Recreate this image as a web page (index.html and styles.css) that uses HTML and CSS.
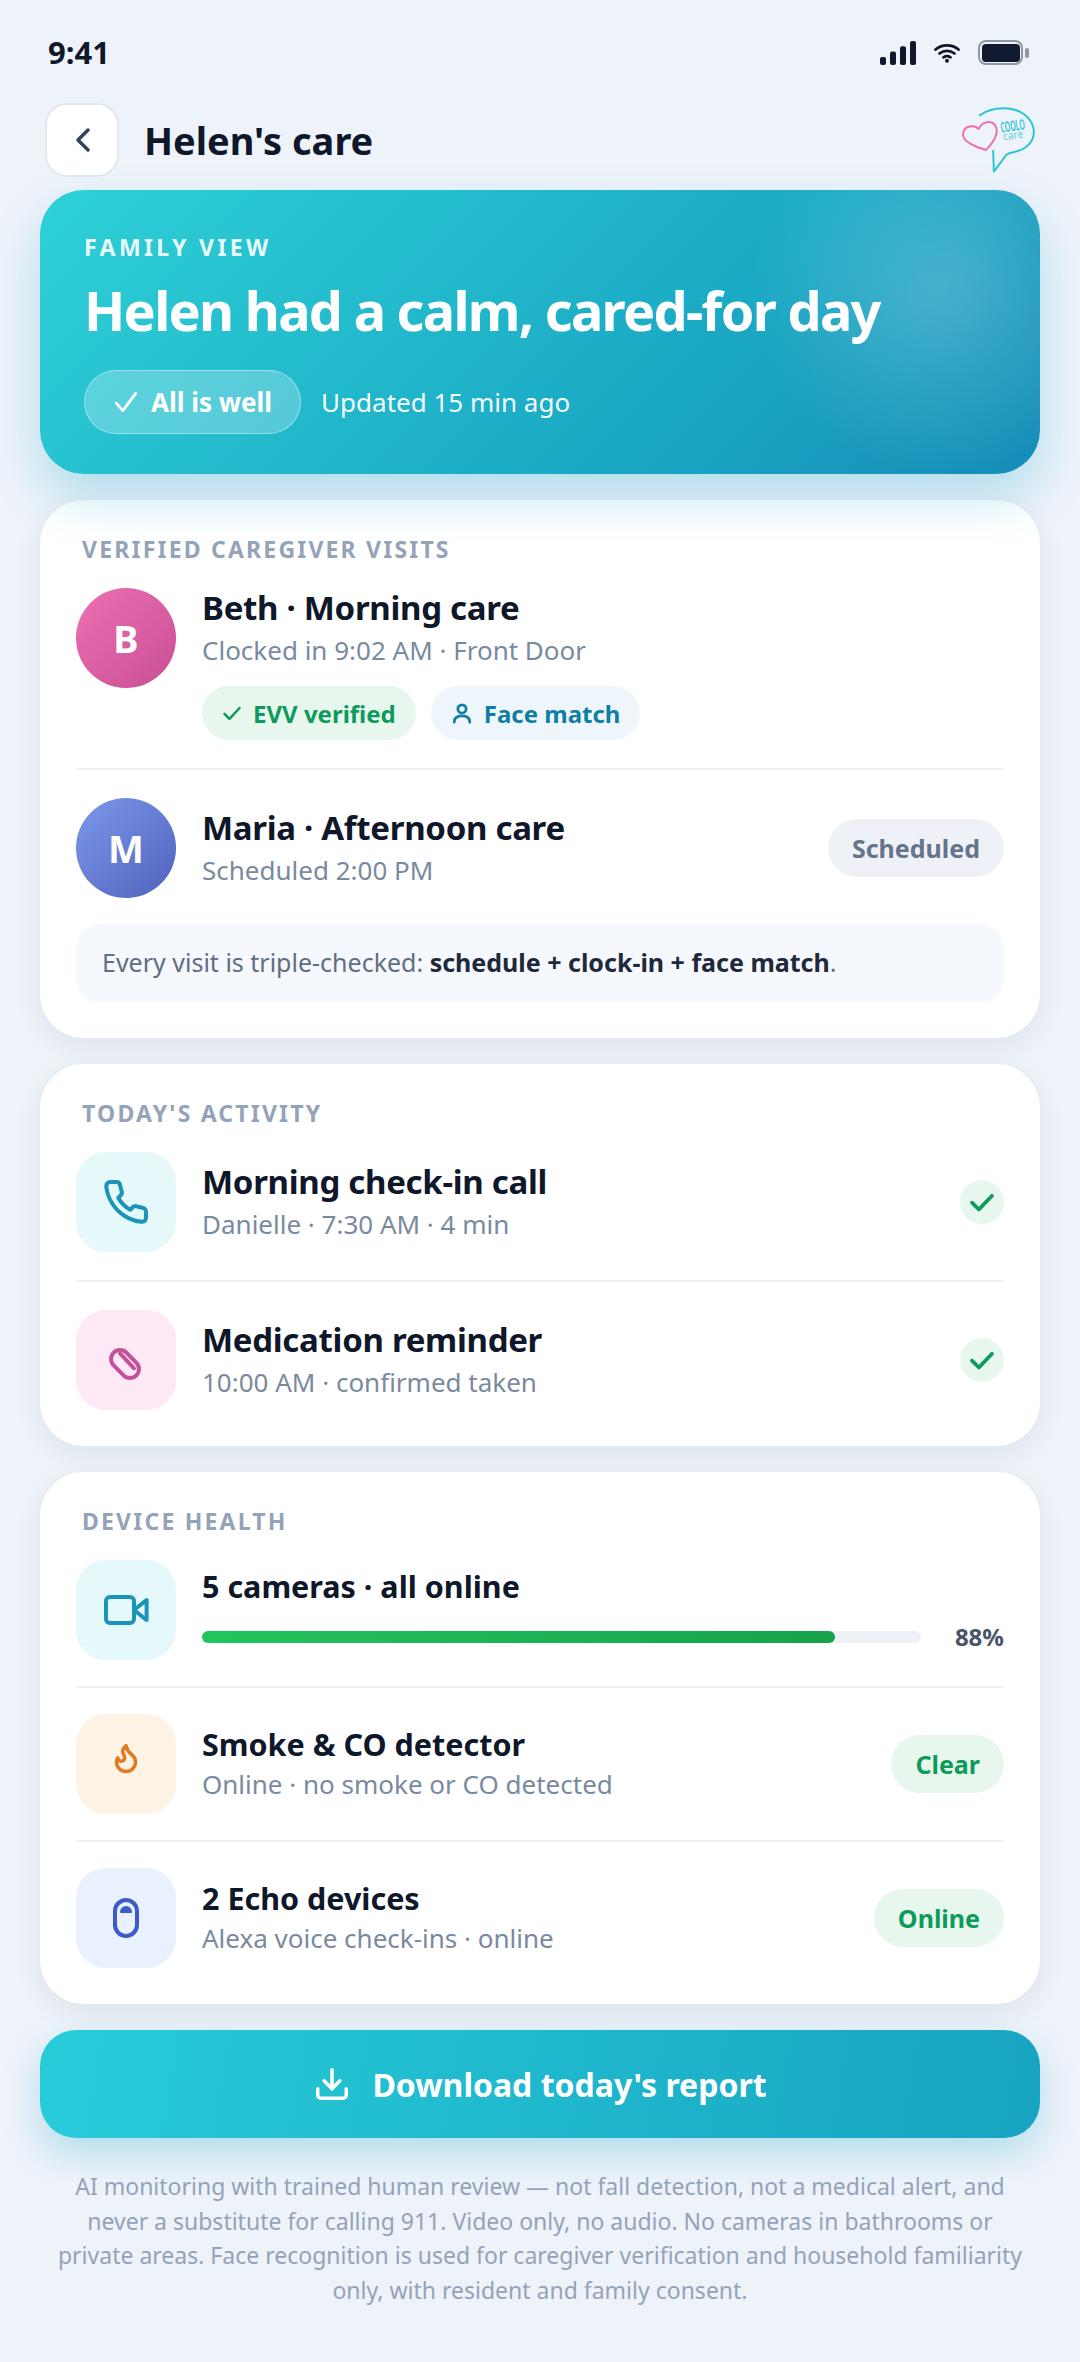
FILE: index.html
```html
<!DOCTYPE html>
<html>

<head>
	<meta charset="utf-8">
	<title>Helen's care</title>
	<link rel="stylesheet" href="styles.css">
</head>

<body>
	<div class="page">
		<!-- status bar -->
		<div class="status">
			<span class="time">9:41</span>
			<div class="status-icons">
				<svg class="signal" width="36" height="24" viewBox="0 0 36 24">
					<rect x="0" y="16" width="6" height="8" rx="2"></rect>
					<rect x="10" y="10.6" width="6" height="13.4" rx="2"></rect>
					<rect x="20" y="5.3" width="6" height="18.7" rx="2"></rect>
					<rect x="30" y="0" width="6" height="24" rx="2"></rect>
				</svg>
				<svg class="wifi" width="26" height="20" viewBox="0 0 26 20">
					<path d="M1.5 6.5C8 1 18 1 24.5 6.5"></path>
					<path d="M5.5 10.5C10 7 16 7 20.5 10.5"></path>
					<path d="M9.5 14.3C11.5 13 14.5 13 16.5 14.3"></path>
					<circle cx="13" cy="17.8" r="2"></circle>
				</svg>
				<div class="battery">
					<div class="battery-body"><div class="battery-fill"></div></div>
					<div class="battery-nub"></div>
				</div>
			</div>
		</div>

		<!-- header -->
		<div class="header">
			<button class="back">
				<svg width="24" height="30" viewBox="0 0 24 30"><path d="M18 5L8 15l10 10"></path></svg>
			</button>
			<h1 class="page-title">Helen's care</h1>
			<svg class="logo" width="78" height="74" viewBox="90 40 235 222">
				<path class="logo-bubble" d="M150 76C190 50 250 48 285 75C322 105 322 150 285 175C265 188 245 186 230 195L192 246L190 183"></path>
				<path class="logo-heart" d="M146 118C135 105 100 105 99 135C99 155 135 172 168 181C190 160 204 135 200 118C195 90 160 90 146 118Z"></path>
				<text class="logo-coolo" x="214" y="129" textLength="74" lengthAdjust="spacingAndGlyphs" transform="rotate(-8 214 129)">COOLO</text>
				<text class="logo-care" x="222" y="152" textLength="60" lengthAdjust="spacingAndGlyphs" transform="rotate(-8 222 152)">care</text>
			</svg>
		</div>

		<!-- hero -->
		<div class="hero">
			<div class="hero-label">FAMILY VIEW</div>
			<h2 class="hero-title">Helen had a calm, cared-for day</h2>
			<div class="hero-meta">
				<span class="hero-pill">
					<svg class="line-icon" width="26" height="26" viewBox="0 0 24 24"><path d="M3 13l6 7L21 4"></path></svg>
					All is well
				</span>
				<span class="hero-updated">Updated 15 min ago</span>
			</div>
		</div>

		<!-- visits -->
		<div class="card">
			<div class="card-label">VERIFIED CAREGIVER VISITS</div>
			<div class="row row-top row-first">
				<div class="avatar avatar-pink">B</div>
				<div class="row-text">
					<div class="row-title">Beth · Morning care</div>
					<div class="row-sub">Clocked in 9:02 AM · Front Door</div>
					<div class="chips">
						<span class="chip chip-green">
							<svg class="line-icon" width="20" height="20" viewBox="0 0 24 24"><path d="M3 13l6 6L21 6"></path></svg>
							EVV verified
						</span>
						<span class="chip chip-blue">
							<svg class="line-icon" width="22" height="22" viewBox="0 0 24 24"><circle cx="12" cy="7.5" r="4.5"></circle><path d="M3.5 22c0-5 3.5-7 8.500-7s8.500 2 8.500 7"></path></svg>
							Face match
						</span>
					</div>
				</div>
			</div>
			<div class="row row-before-note">
				<div class="avatar avatar-blue">M</div>
				<div class="row-text">
					<div class="row-title">Maria · Afternoon care</div>
					<div class="row-sub">Scheduled 2:00 PM</div>
				</div>
				<span class="tag tag-grey">Scheduled</span>
			</div>
			<div class="note">Every visit is triple-checked: <b>schedule + clock-in + face match</b>.</div>
		</div>

		<!-- activity -->
		<div class="card">
			<div class="card-label">TODAY'S ACTIVITY</div>
			<div class="row row-first">
				<div class="tile tile-teal">
					<svg class="tile-icon" width="48" height="48" viewBox="0 0 24 24"><path d="M22 16.920v3a2 2 0 0 1-2.180 2 19.790 19.790 0 0 1-8.630-3.070 19.500 19.500 0 0 1-6-6 19.790 19.790 0 0 1-3.070-8.670A2 2 0 0 1 4.110 2h3a2 2 0 0 1 2 1.720 12.840 12.840 0 0 0 .7 2.810 2 2 0 0 1-.45 2.110L8.090 9.910a16 16 0 0 0 6 6l1.270-1.270a2 2 0 0 1 2.110-.45 12.840 12.840 0 0 0 2.810.7A2 2 0 0 1 22 16.92z"></path></svg>
				</div>
				<div class="row-text">
					<div class="row-title">Morning check-in call</div>
					<div class="row-sub">Danielle · 7:30 AM · 4 min</div>
				</div>
				<span class="done"><svg class="line-icon" width="30" height="30" viewBox="0 0 24 24"><path d="M4 12.500l5.500 5.500L20 7"></path></svg></span>
			</div>
			<div class="row">
				<div class="tile tile-pink">
					<svg class="tile-icon" width="48" height="48" viewBox="0 0 24 24"><rect x="3.500" y="9.500" width="16" height="9" rx="4.500" transform="rotate(45 11.500 14)"></rect><path d="M9 8.700l7 7.500"></path></svg>
				</div>
				<div class="row-text">
					<div class="row-title">Medication reminder</div>
					<div class="row-sub">10:00 AM · confirmed taken</div>
				</div>
				<span class="done"><svg class="line-icon" width="30" height="30" viewBox="0 0 24 24"><path d="M4 12.500l5.500 5.500L20 7"></path></svg></span>
			</div>
		</div>

		<!-- devices -->
		<div class="card devices">
			<div class="card-label">DEVICE HEALTH</div>
			<div class="row row-first">
				<div class="tile tile-teal">
					<svg class="tile-icon" width="48" height="48" viewBox="0 0 24 24"><rect x="2" y="5.500" width="14" height="13" rx="2"></rect><path d="M16 12l6.300-5v10z"></path></svg>
				</div>
				<div class="row-text">
					<div class="row-title">5 cameras · all online</div>
					<div class="meter">
						<div class="meter-track"><div class="meter-fill" style="width: 88%"></div></div>
						<span class="meter-value">88%</span>
					</div>
				</div>
			</div>
			<div class="row">
				<div class="tile tile-orange">
					<svg class="tile-icon" width="48" height="48" viewBox="0 0 24 24"><g transform="translate(3.840 .75) scale(.68)"><path class="flame" d="M8.500 14.500A2.500 2.500 0 0 0 11 12c0-1.380-.5-2-1-3-1.072-2.143-.224-4.054 2-6 .5 2.500 2 4.900 4 6.500 2 1.600 3 3.500 3 5.500a7 7 0 1 1-14 0c0-1.153.433-2.294 1-3a2.500 2.500 0 0 0 2.500 2.500z"></path></g></svg>
				</div>
				<div class="row-text">
					<div class="row-title">Smoke &amp; CO detector</div>
					<div class="row-sub">Online · no smoke or CO detected</div>
				</div>
				<span class="tag tag-green">Clear</span>
			</div>
			<div class="row">
				<div class="tile tile-indigo">
					<svg class="tile-icon" width="48" height="48" viewBox="0 0 24 24"><rect x="6.500" y="3" width="11" height="18" rx="5.500"></rect><path class="dome" d="M9.500 9a2.500 2.500 0 0 1 5 0z"></path></svg>
				</div>
				<div class="row-text">
					<div class="row-title">2 Echo devices</div>
					<div class="row-sub">Alexa voice check-ins · online</div>
				</div>
				<span class="tag tag-green">Online</span>
			</div>
		</div>

		<button class="download">
			<svg class="line-icon" width="38" height="38" viewBox="0 0 24 24"><path d="M21 15v4a2 2 0 0 1-2 2H5a2 2 0 0 1-2-2v-4"></path><path d="M7 10l5 5 5-5"></path><path d="M12 15V3"></path></svg>
			Download today's report
		</button>

		<p class="disclaimer">AI monitoring with trained human review — not fall detection, not a medical alert, and never a substitute for calling 911. Video only, no audio. No cameras in bathrooms or private areas. Face recognition is used for caregiver verification and household familiarity only, with resident and family consent.</p>
	</div>
</body>

</html>
```

FILE: styles.css
```css
* {
	box-sizing: border-box;
}

body {
	margin: 0;
	background-color: #eef3fa;
	font-family: "Noto Sans", "Liberation Sans", sans-serif;
	color: #0f172a;
}

.page {
	width: 1080px;
	height: 2362px;
	overflow: hidden;
	padding: 0 40px;
	display: flex;
	flex-direction: column;
}

/* status bar */
.status {
	height: 103px;
	flex: none;
	margin: 0 -40px;
	padding: 34px 51px 0 48px;
	display: flex;
	justify-content: space-between;
	align-items: flex-start;
}

.time {
	font-size: 31px;
	line-height: 36px;
	font-weight: 700;
}

.status-icons {
	display: flex;
	align-items: center;
	gap: 18px;
	padding-top: 6px;
}

.signal {
	fill: #0f172a;
}

.wifi path {
	fill: none;
	stroke: #0f172a;
	stroke-width: 2.800;
	stroke-linecap: round;
}

.wifi circle {
	fill: #0f172a;
}

.battery {
	display: flex;
	align-items: center;
	gap: 2px;
}

.battery-body {
	width: 45px;
	height: 25px;
	border: 2.500px solid #8f97a3;
	border-radius: 8px;
	padding: 1.500px;
}

.battery-fill {
	height: 100%;
	background-color: #0f1a2e;
	border-radius: 4px;
}

.battery-nub {
	width: 4px;
	height: 10px;
	background-color: #8f97a3;
	border-radius: 2px;
}

/* header */
.header {
	height: 74px;
	flex: none;
	margin: 0 2px 13px 5px;
	display: flex;
	align-items: center;
}

.back {
	width: 74px;
	height: 74px;
	padding: 0;
	background-color: #fff;
	border: 2px solid #e2e8f0;
	border-radius: 22px;
	display: flex;
	align-items: center;
	justify-content: center;
}

.back path {
	fill: none;
	stroke: #33425a;
	stroke-width: 3.500;
	stroke-linecap: round;
	stroke-linejoin: round;
}

.page-title {
	margin: 0 0 0 25px;
	font-size: 38px;
	line-height: 50px;
	font-weight: 700;
	flex: 1;
}

.logo {
	overflow: visible;
}

.logo path {
	fill: none;
	stroke-width: 6;
	stroke-linecap: round;
	stroke-linejoin: round;
}

.logo-bubble {
	stroke: #2cc5d3;
}

.logo-heart {
	stroke: #ee6fb0;
}

.logo-coolo {
	font-size: 44px;
	font-weight: 600;
	fill: #2cc5d3;
}

.logo-care {
	font-size: 34px;
	fill: #5fd0dc;
}

/* hero card */
.hero {
	position: relative;
	z-index: 1;
	height: 284px;
	flex: none;
	padding: 43px 44px 0;
	border-radius: 44px;
	color: #fff;
	background:
		radial-gradient(circle 190px at 900px 96px, rgba(255, 255, 255, .2), rgba(255, 255, 255, 0)),
		linear-gradient(135deg, #2ed1d7 0%, #1aa8c4 65%, #168cb8 100%);
	box-shadow: 0 24px 48px rgba(26, 168, 196, .28);
}

.hero-label {
	font-size: 23px;
	line-height: 28px;
	font-weight: 700;
	letter-spacing: 3.400px;
	opacity: .9;
}

.hero-title {
	margin: 14px 0 0;
	font-size: 54px;
	line-height: 70px;
	font-weight: 700;
	letter-spacing: -1.700px;
}

.hero-meta {
	margin-top: 25px;
	display: flex;
	align-items: center;
	gap: 20px;
}

.hero-pill {
	height: 64px;
	padding: 0 28px;
	display: flex;
	align-items: center;
	gap: 12px;
	font-size: 26px;
	font-weight: 700;
	background-color: rgba(255, 255, 255, .24);
	border: 1.500px solid rgba(255, 255, 255, .4);
	border-radius: 32px;
}

.hero-updated {
	font-size: 26px;
	opacity: .95;
}

.line-icon {
	flex: none;
}

.line-icon path,
.line-icon circle {
	fill: none;
	stroke: currentColor;
	stroke-width: 2.500;
	stroke-linecap: round;
	stroke-linejoin: round;
}

/* cards */
.card {
	flex: none;
	margin-top: 26px;
	padding: 34px 36px 36px;
	background-color: #fff;
	border-radius: 44px;
	box-shadow: 0 8px 28px rgba(15, 23, 42, .07);
}

.card-label {
	margin: 0 0 24px 6px;
	font-size: 23px;
	line-height: 30px;
	font-weight: 700;
	letter-spacing: 2.200px;
	color: #94a3b8;
}

.row {
	display: flex;
	align-items: center;
	gap: 26px;
	padding: 28px 0;
	border-top: 2px solid #eef2f7;
}

.row-first {
	padding-top: 0;
	border-top: none;
}

.row-top {
	align-items: flex-start;
}

.row-before-note {
	padding-bottom: 26px;
}

.row:last-child {
	padding-bottom: 0;
}

.devices .row {
	padding-top: 26px;
	padding-bottom: 26px;
}

.devices .row-first {
	padding-top: 0;
}

.devices .row:last-child {
	padding-bottom: 0;
}

.row-text {
	flex: 1;
	min-width: 0;
}

.row-title {
	font-size: 33px;
	line-height: 40px;
	font-weight: 700;
	letter-spacing: -.3px;
}

.devices .row-title {
	font-size: 30.500px;
	letter-spacing: 0;
}

.row-sub {
	margin-top: 4px;
	font-size: 26px;
	line-height: 36px;
	color: #7a8a9e;
}

.devices .row-sub {
	margin: 2px 0 2px;
}

.avatar {
	width: 100px;
	height: 100px;
	flex: none;
	border-radius: 50%;
	display: flex;
	align-items: center;
	justify-content: center;
	font-size: 38px;
	font-weight: 700;
	color: #fff;
}

.avatar-pink {
	background: linear-gradient(135deg, #ee6fb4, #c84f94);
}

.avatar-blue {
	background: linear-gradient(135deg, #7c98ea, #5062bd);
}

.chips {
	margin-top: 18px;
	display: flex;
	gap: 15px;
}

.chip {
	height: 54px;
	padding: 0 20px;
	display: flex;
	align-items: center;
	gap: 11px;
	border-radius: 27px;
	font-size: 24px;
	font-weight: 700;
}

.chip .line-icon path,
.chip .line-icon circle {
	stroke-width: 3;
}

.chip-green {
	background-color: #e8f7ee;
	color: #0e9a5c;
}

.chip-blue {
	background-color: #eef6fc;
	color: #0e7fa3;
}

.tag {
	height: 58px;
	padding: 0 24px;
	flex: none;
	display: flex;
	align-items: center;
	border-radius: 29px;
	font-size: 25px;
	font-weight: 700;
}

.tag-grey {
	background-color: #eef2f7;
	color: #64748b;
}

.tag-green {
	background-color: #e8f7ee;
	color: #0e9a5c;
}

.note {
	height: 78px;
	padding: 0 26px 2px;
	display: flex;
	align-items: center;
	white-space: pre-wrap;
	background-color: #f5f8fc;
	border-radius: 24px;
	font-size: 25px;
	color: #5f6e82;
}

.note b {
	color: #1e293b;
}

.tile {
	width: 100px;
	height: 100px;
	flex: none;
	border-radius: 30px;
	display: flex;
	align-items: center;
	justify-content: center;
}

.tile-icon rect,
.tile-icon path {
	fill: none;
	stroke: currentColor;
	stroke-width: 2;
	stroke-linecap: round;
	stroke-linejoin: round;
}

.tile-icon .flame {
	stroke-width: 2.600;
}

.tile-icon .dome {
	fill: currentColor;
	stroke-width: 1;
}

.tile-teal {
	background-color: #e5f8fa;
	color: #1a94b8;
}

.tile-pink {
	background-color: #fde9f5;
	color: #c4529a;
}

.tile-orange {
	background-color: #fff3e6;
	color: #e07b25;
}

.tile-indigo {
	background-color: #e9f0fe;
	color: #3b5bc8;
}

.done {
	width: 44px;
	height: 44px;
	flex: none;
	border-radius: 50%;
	background-color: #e8f7ee;
	color: #0e9a5c;
	display: flex;
	align-items: center;
	justify-content: center;
}

.done .line-icon path {
	stroke-width: 3;
}

.meter {
	margin-top: 14px;
	display: flex;
	align-items: center;
	gap: 34px;
}

.meter-track {
	flex: 1;
	height: 12px;
	background-color: #eef2f7;
	border-radius: 6px;
}

.meter-fill {
	height: 100%;
	background: linear-gradient(90deg, #22c55e, #16a34a);
	border-radius: 6px;
}

.meter-value {
	font-size: 24px;
	line-height: 34px;
	font-weight: 700;
	color: #475569;
}

/* bottom button */
.download {
	flex: none;
	height: 108px;
	margin-top: 26px;
	display: flex;
	align-items: center;
	justify-content: center;
	gap: 21px;
	font-family: inherit;
	font-size: 32px;
	font-weight: 700;
	color: #fff;
	border: none;
	border-radius: 36px;
	background: linear-gradient(100deg, #28ccd9, #17a4c2);
	box-shadow: 0 16px 36px rgba(26, 168, 196, .28);
}

.download .line-icon path {
	stroke-width: 2.200;
}

.disclaimer {
	margin: 31px 0 0;
	padding: 0 12px;
	text-align: center;
	font-size: 23px;
	line-height: 34.500px;
	color: #94a3b8;
}
```
